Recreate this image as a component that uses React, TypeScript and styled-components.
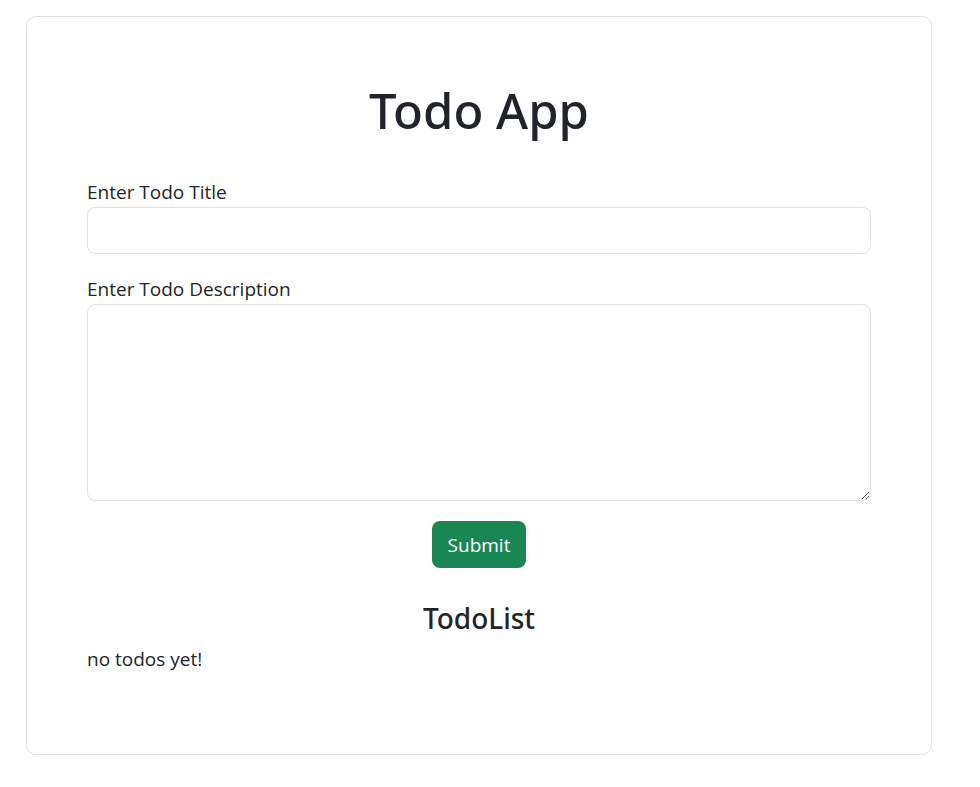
import styled, { createGlobalStyle } from "styled-components";

const GlobalStyle = createGlobalStyle`
  * {
    box-sizing: border-box;
  }
  body {
    margin: 0;
    background: #fff;
    color: #212529;
    font-family: "Open Sans", "Noto Sans", sans-serif;
  }
`;

const Page = styled.main`
  padding: 16px 48px 32px 26px;
`;

const Card = styled.section`
  display: flex;
  flex-direction: column;
  border: 1px solid #dfdfdf;
  border-radius: 10px;
  padding: 60px;
`;

const Title = styled.h1`
  margin: 3px 0 37px;
  font-family: "Noto Sans", "Open Sans", sans-serif;
  font-size: 49px;
  font-weight: 500;
  line-height: 60px;
  text-align: center;
`;

const Field = styled.div`
  display: flex;
  flex-direction: column;
  margin-bottom: 20px;
`;

const Label = styled.label`
  font-size: 19px;
  line-height: 30px;
`;

const Input = styled.input`
  height: 47px;
  border: 1px solid #dee2e6;
  border-radius: 8px;
  padding: 8px 15px;
  font: inherit;
  font-size: 19px;
`;

const TextArea = styled.textarea`
  height: 197px;
  border: 1px solid #dee2e6;
  border-radius: 8px;
  padding: 8px 15px;
  font: inherit;
  font-size: 19px;
  resize: vertical;
`;

const SubmitButton = styled.button`
  align-self: center;
  width: 94px;
  height: 47px;
  border: none;
  border-radius: 8px;
  background: #198754;
  color: #fff;
  font-family: inherit;
  font-size: 19px;
`;

const ListTitle = styled.h4`
  margin: 32px 0 8px;
  font-family: "Noto Sans", "Open Sans", sans-serif;
  font-size: 28px;
  font-weight: 500;
  line-height: 36px;
  text-align: center;
`;

const Empty = styled.p`
  margin: 0 0 20px;
  font-size: 19px;
  line-height: 30px;
`;

export default function App() {
  return (
    <Page>
      <GlobalStyle />
      <Card>
        <Title>Todo App</Title>
        <form onSubmit={(e) => e.preventDefault()} style={{ display: "contents" }}>
          <Field>
            <Label htmlFor="title">Enter Todo Title</Label>
            <Input id="title" type="text" />
          </Field>
          <Field>
            <Label htmlFor="desc">Enter Todo Description</Label>
            <TextArea id="desc" />
          </Field>
          <SubmitButton type="submit">Submit</SubmitButton>
        </form>
        <ListTitle>TodoList</ListTitle>
        <Empty>no todos yet!</Empty>
      </Card>
    </Page>
  );
}
